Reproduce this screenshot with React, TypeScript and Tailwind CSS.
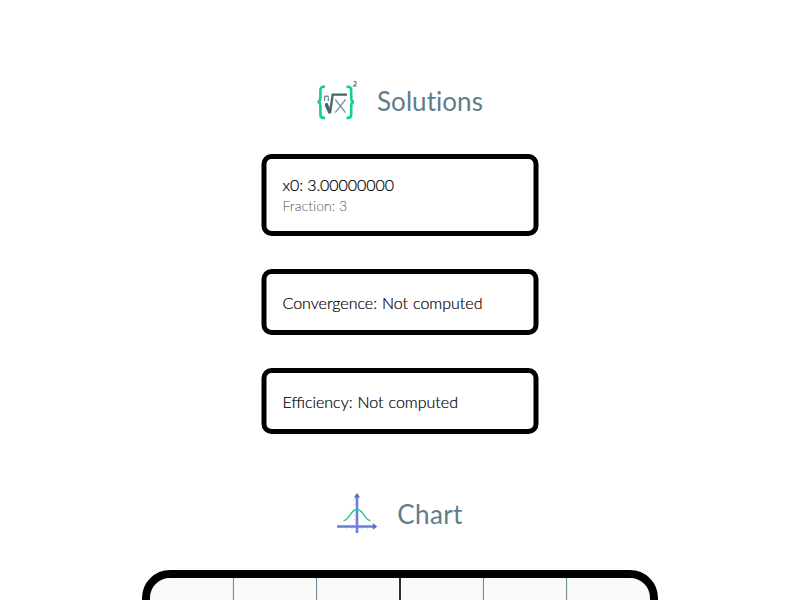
import type { ReactNode } from "react";

function EquationIcon() {
  return (
    <svg className="h-10 w-10 shrink-0" viewBox="0 0 40 40" fill="none">
      <g stroke="#15cf8d" strokeWidth="2.6">
        <path d="M8 6.8H6.5Q3.4 6.8 3.4 10V17.5Q3.4 21.9 0.5 21.9Q3.4 21.9 3.4 26V34.5Q3.4 37.9 6.5 37.9H8" />
        <path d="M29.5 6.8H31Q34.2 6.8 34.2 10V17.5Q34.2 21.9 37 21.9Q34.2 21.9 34.2 26V34.5Q34.2 37.9 31 37.9H29.5" />
      </g>
      <path d="M8 24.5H10L13 33L15.7 14.7H30" stroke="#42686b" strokeWidth="2.3" />
      <path d="M9 24.5L13 33" stroke="#42686b" strokeWidth="3" />
      <path d="M18.3 19.5L28.5 32.7M28.5 19.5L18.3 32.7" stroke="#7793a0" strokeWidth="1.3" />
      <path d="M7.6 21V15.8M7.6 17.4Q8.7 16 10 16Q11.4 16.1 11.4 17.8V21" stroke="#7490a0" strokeWidth="1.4" />
      <path d="M36.7 2.4Q36.9 1.3 38 1.3Q39.3 1.3 39.3 2.6Q39.3 3.6 36.7 5.9H39.7" stroke="#607d8b" strokeWidth="1.1" />
    </svg>
  );
}

function CurveIcon() {
  return (
    <svg className="h-10 w-10 shrink-0" viewBox="0 0 40 40" fill="none">
      <path d="M18 6.5H16M18 11.5H16M18 16.5H16M18 21.5H16M18 26.5H16M10 34V36.5M15 34V36.5M25 34V36.5M30 34V36.5" stroke="#d2eaff" strokeWidth="1.5" />
      <path d="M20 3V40M0 33.5H37" stroke="#6b7fda" strokeWidth="2.6" />
      <path d="M16.8 4.5L20 0L23.2 4.5ZM35.8 30.3L40.3 33.5L35.8 36.7Z" fill="#586ccc" />
      <path d="M6.5 27.5C12.5 28 13 16.5 20 16.5C27 16.5 27.5 28 33.5 27.5" stroke="#20cd91" strokeWidth="1.4" />
    </svg>
  );
}

function SectionTitle({ icon, children, className }: { icon: ReactNode; children: ReactNode; className: string }) {
  return (
    <h2 className={`flex h-10 items-center justify-center gap-5 text-[26px] leading-10 text-[#607d8b] [font-variant-ligatures:none] ${className}`}>
      {icon}
      <span className="translate-y-px">{children}</span>
    </h2>
  );
}

function ResultCard({ title, detail }: { title: string; detail?: string }) {
  return (
    <div className={`flex w-[277px] translate-x-[0.5px] flex-col justify-center rounded-[10px] border-5 border-black px-4 text-base font-light leading-6 text-black [-webkit-text-stroke:0.2px] ${detail ? "h-[82px]" : "h-[66px]"}`}>
      <p className={detail ? "translate-y-px leading-5 tracking-[-0.06px]" : "translate-y-px [word-spacing:0.6px]"}>{title}</p>
      {detail && <p className="translate-y-px text-sm leading-[22px] tracking-[0.05px] text-black/55 [font-variant-ligatures:none]">{detail}</p>}
    </div>
  );
}

export default function App() {
  return (
    <main className="flex h-[600px] w-[800px] flex-col items-center overflow-hidden bg-white pt-20 font-['Lato',sans-serif]">
      <SectionTitle className="tracking-[0.05px]" icon={<EquationIcon />}>Solutions</SectionTitle>
      <section className="mt-[34px] flex w-[278px] flex-col gap-[33px]">
        <ResultCard title="x0: 3.00000000" detail="Fraction: 3" />
        <ResultCard title="Convergence: Not computed" />
        <ResultCard title="Efficiency: Not computed" />
      </section>
      <div className="mt-[59px]">
        <SectionTitle className="tracking-[0.4px]" icon={<CurveIcon />}>Chart</SectionTitle>
      </div>
      <div className="mt-[37px] h-[516px] w-[516px] shrink-0 overflow-hidden rounded-[28px] border-8 border-black bg-[#fafafa]">
        <svg className="h-[500px] w-[500px]" viewBox="0 0 500 500" shapeRendering="crispEdges">
          <path d="M83.5 0V500M166.5 0V500M333.5 0V500M416.5 0V500" stroke="#78909c" />
          <path d="M82.5 0V500M167.5 0V500M332.5 0V500M417.5 0V500" stroke="#e7edf0" />
          <path d="M250 0V500" stroke="#263238" strokeWidth="2" />
        </svg>
      </div>
    </main>
  );
}
